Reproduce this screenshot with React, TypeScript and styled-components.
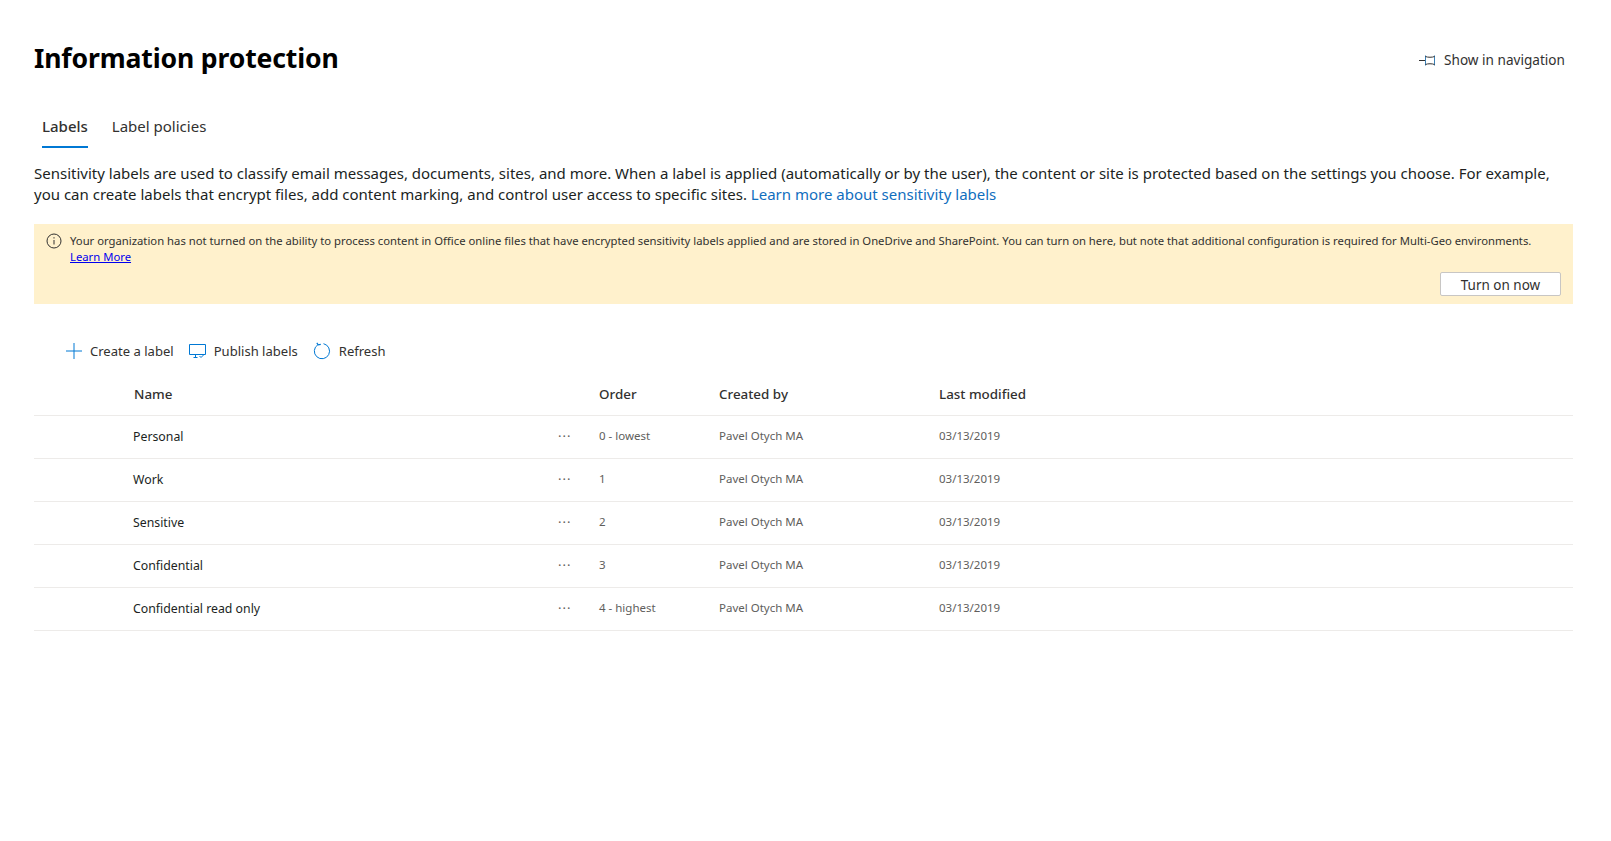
import React from "react";
import styled, { createGlobalStyle } from "styled-components";

const GlobalStyle = createGlobalStyle`
	html, body {
		margin: 0;
		padding: 0;
		background: #FFFFFF;
		font-family: "Noto Sans", "Open Sans", "Liberation Sans", sans-serif;
		color: #201F1E;
	}
	* {
		box-sizing: border-box;
	}
`

const Page = styled.div`
	width: 1611px;
	height: 841px;
	padding: 0 38px 0 34px;
	overflow: hidden;
`

const Header = styled.header`
	height: 118px;
	display: flex;
	align-items: flex-start;
	justify-content: space-between;
`

const Title = styled.h1`
	margin: 38px 0 0 0;
	font-size: 26.6px;
	line-height: 40px;
	font-weight: 700;
	letter-spacing: -0.15px;
	color: #000000;
`

const NavToggle = styled.button`
	margin: 49px 8px 0 0;
	padding: 0;
	display: flex;
	align-items: center;
	gap: 8px;
	border: 0;
	background: none;
	font: inherit;
	font-size: 13.6px;
	line-height: 22px;
	color: #323130;
`

const Tabs = styled.nav`
	height: 30px;
	display: flex;
	gap: 24px;
	padding-left: 8px;
`

const Tab = styled.div<{ $active?: boolean }>`
	height: 30px;
	font-size: 15px;
	line-height: 17px;
	color: #323130;
	font-weight: ${(p) => (p.$active ? 500 : 400)};
	border-bottom: 2px solid ${(p) => (p.$active ? "#0078D4" : "transparent")};
`

const Intro = styled.p`
	margin: 15px 0 0 0;
	font-size: 15px;
	line-height: 21px;
	color: #201F1E;
`

const Link = styled.a`
	color: #106EBE;
`

const Banner = styled.section`
	margin-top: 19px;
	height: 80px;
	padding: 9px 12px 8px 12px;
	background: #FFF1CC;
	display: flex;
	flex-direction: column;
`

const BannerBody = styled.div`
	display: flex;
	gap: 8px;
`

const BannerText = styled.div`
	font-size: 11.29px;
	line-height: 16px;
	color: #323130;
`

const BannerLink = styled.a`
	color: #0000EE;
	text-decoration: underline;
`

const TurnOn = styled.button`
	align-self: flex-end;
	margin-top: 7px;
	width: 121px;
	height: 24px;
	padding: 1px 0 0 0;
	background: #FFFFFF;
	border: 1px solid #C8C6C4;
	border-radius: 2px;
	font: inherit;
	font-size: 13.5px;
	color: #323130;
`

const Toolbar = styled.div`
	margin-top: 33px;
	height: 28px;
	padding-left: 32px;
	display: flex;
	align-items: center;
	gap: 15px;
`

const ToolButton = styled.button`
	padding: 0;
	display: flex;
	align-items: center;
	gap: 8px;
	border: 0;
	background: none;
	font: inherit;
	font-size: 13.05px;
	color: #323130;
`

const Row = styled.div<{ $head?: boolean }>`
	height: ${(p) => (p.$head ? "51px" : "43px")};
	padding: ${(p) => (p.$head ? "8px 0 0 0" : "0 0 2px 0")};
	display: grid;
	grid-template-columns: 100px 424px 41px 120px 220px 1fr;
	align-items: center;
	border-bottom: 1px solid #EDEBE9;
`

const HeadCell = styled.div`
	font-size: 13.4px;
	font-weight: 500;
	color: #323130;
`

const NameCell = styled.div`
	font-size: 12.3px;
	margin-left: -1px;
	color: #201F1E;
`

const Cell = styled.div`
	font-size: 11.5px;
	margin-top: -2px;
	color: #605E5C;
`

const More = styled.div`
	font-size: 13px;
	letter-spacing: 1px;
	color: #605E5C;
`

const PinIcon = () => (
	<svg width="17" height="12" viewBox="0 0 17 12" fill="none" stroke="#323130" strokeWidth="1">
		<path d="M0 6.5h6.5" />
		<path d="M6.5 1.5v10M15.5 1.5v10" stroke="#3A7FB5" />
		<path d="M6.5 2.5c2 1 7 1 9 0M6.5 10.5c2-1 7-1 9 0" />
	</svg>
)

const InfoIcon = () => (
	<svg width="16" height="16" viewBox="0 0 16 16" fill="none" stroke="#323130" strokeWidth="1" style={{ flexShrink: 0 }}>
		<circle cx="8" cy="8" r="7" />
		<path d="M8 7v4.5M8 4.2v1.3" />
	</svg>
)

const PlusIcon = () => (
	<svg width="16" height="16" viewBox="0 0 16 16" fill="none" stroke="#0078D4" strokeWidth="1">
		<path d="M8 0v16M0 8h16" />
	</svg>
)

const PublishIcon = () => (
	<svg width="17" height="16" viewBox="0 0 17 16" fill="none" stroke="#0078D4" strokeWidth="1">
		<path d="M.5 1.5h16v10H.5z" />
		<path d="M6.5 11.5v3M4.5 14.5h4M10.5 13l1.5 1.5L15 11.5" />
	</svg>
)

const RefreshIcon = () => (
	<svg width="18" height="18" viewBox="0 0 18 18" fill="none" stroke="#0078D4" strokeWidth="1">
		<path d="M10.5 1.7a7.6 7.6 0 1 1-5.6 1" />
		<path d="M3.8 .8l1.4 2 2.6-.4" strokeWidth="1.2" />
	</svg>
)

const labels = [
	{ name: "Personal", order: "0 - lowest" },
	{ name: "Work", order: "1" },
	{ name: "Sensitive", order: "2" },
	{ name: "Confidential", order: "3" },
	{ name: "Confidential read only", order: "4 - highest" },
]

export default function App() {
	return (
		<Page>
			<GlobalStyle />
			<Header>
				<Title>Information protection</Title>
				<NavToggle>
					<PinIcon />
					Show in navigation
				</NavToggle>
			</Header>
			<Tabs>
				<Tab $active>Labels</Tab>
				<Tab>Label policies</Tab>
			</Tabs>
			<Intro>
				Sensitivity labels are used to classify email messages, documents, sites, and more. When a label is applied (automatically or by the user), the content or site is protected based on the settings you choose. For example, you can create labels that encrypt files, add content marking, and control user access to specific sites. <Link>Learn more about sensitivity labels</Link>
			</Intro>
			<Banner>
				<BannerBody>
					<InfoIcon />
					<BannerText>
						Your organization has not turned on the ability to process content in Office online files that have encrypted sensitivity labels applied and are stored in OneDrive and SharePoint. You can turn on here, but note that additional configuration is required for Multi-Geo environments.
						<br />
						<BannerLink>Learn More</BannerLink>
					</BannerText>
				</BannerBody>
				<TurnOn>Turn on now</TurnOn>
			</Banner>
			<Toolbar>
				<ToolButton><PlusIcon />Create a label</ToolButton>
				<ToolButton><PublishIcon />Publish labels</ToolButton>
				<ToolButton><RefreshIcon />Refresh</ToolButton>
			</Toolbar>
			<Row $head>
				<span />
				<HeadCell>Name</HeadCell>
				<span />
				<HeadCell>Order</HeadCell>
				<HeadCell>Created by</HeadCell>
				<HeadCell>Last modified</HeadCell>
			</Row>
			{labels.map((label) => (
				<Row key={label.name}>
					<span />
					<NameCell>{label.name}</NameCell>
					<More>···</More>
					<Cell>{label.order}</Cell>
					<Cell>Pavel Otych MA</Cell>
					<Cell>03/13/2019</Cell>
				</Row>
			))}
		</Page>
	)
}
